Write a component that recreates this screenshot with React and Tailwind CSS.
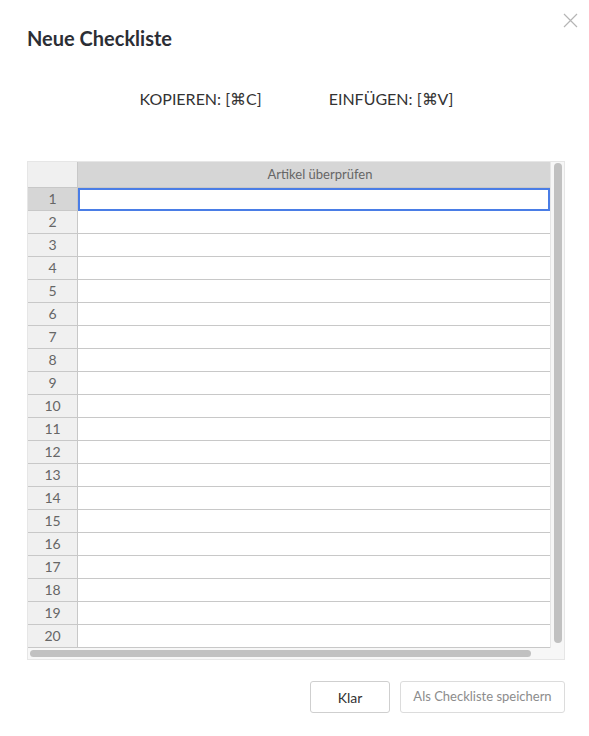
import React from "react";

const rows = Array.from({ length: 20 }, (_, i) => i + 1);

const App = () => {
  return (
    <div
      className="w-[589px] h-[736px] bg-white relative text-[#333]"
      style={{ fontFamily: "Lato, 'Liberation Sans', sans-serif" }}
    >
      {/* close */}
      <button className="absolute left-[563px] top-[13px] w-[15px] h-[15px]">
        <svg width="15" height="15" viewBox="0 0 15 15">
          <path d="M1 1L14 14M14 1L1 14" stroke="#b5b5b5" strokeWidth="1.2" />
        </svg>
      </button>

      <div className="pt-[26px] pl-[27px]">
        <h2 className="text-[20px] leading-[24px] font-bold text-[#2c2e35]">Neue Checkliste</h2>
      </div>

      {/* Tastenkürzel */}
      <div className="flex justify-center gap-[67px] mt-[39px] pl-[4px] text-[16px] leading-[20px] text-[#333]">
        <span>KOPIEREN: [⌘C]</span>
        <span>EINFÜGEN: [⌘V]</span>
      </div>

      {/* Tabelle */}
      <div className="mt-[52px] ml-[27px] w-[538px] h-[499px] border border-[#e6e6e6] flex flex-col bg-[#f7f7f7]">
        <div className="flex flex-1">
          <div className="w-[523px] flex flex-col bg-white border-r border-[#e6e6e6]">
            <div className="flex h-[26px] bg-[#d6d6d6] text-[13px] text-[#666]">
              <div className="w-[50px] bg-[#f0f0f0] border-r border-b border-[#c8c8c8]" />
              <div className="flex-1 flex items-center justify-center pl-[12px] border-b border-[#c8c8c8]">
                Artikel überprüfen
              </div>
            </div>
            {rows.map((n) => (
              <div key={n} className="flex h-[23px] text-[14px] leading-[20px] text-[#666]">
                <div
                  className={
                    n === 1
                      ? "w-[50px] bg-[#d6d6d6] border-r border-b border-[#c8c8c8] flex items-center justify-center"
                      : "w-[50px] bg-[#f0f0f0] border-r border-b border-[#c8c8c8] flex items-center justify-center"
                  }
                >
                  {n}
                </div>
                {n === 1 ? (
                  <div className="flex-1 border-2 border-[#4a7de6]" />
                ) : (
                  <div className="flex-1 border-b border-[#c8c8c8]" />
                )}
              </div>
            ))}
          </div>
          {/* vertikale Scrollleiste */}
          <div className="flex-1 flex justify-center pt-[1px] pb-[5px]">
            <div className="w-[8px] h-full rounded-full bg-[#c1c1c1]" />
          </div>
        </div>
        {/* horizontale Scrollleiste */}
        <div className="h-[12px] flex items-center pl-[2px]">
          <div className="w-[501px] h-[7px] rounded-full bg-[#c1c1c1]" />
        </div>
      </div>

      {/* Aktionen */}
      <div className="flex justify-end gap-[10px] mt-[21px] mr-[24px]">
        <button className="w-[80px] h-[32px] border border-[#cfcfcf] rounded-[3px] text-[14px] text-[#333] bg-white">
          Klar
        </button>
        <button className="w-[165px] h-[32px] border border-[#dcdcdc] rounded-[3px] text-[13px] text-[#8c8c8c] bg-white">
          Als Checkliste speichern
        </button>
      </div>
    </div>
  );
};

export default App;
